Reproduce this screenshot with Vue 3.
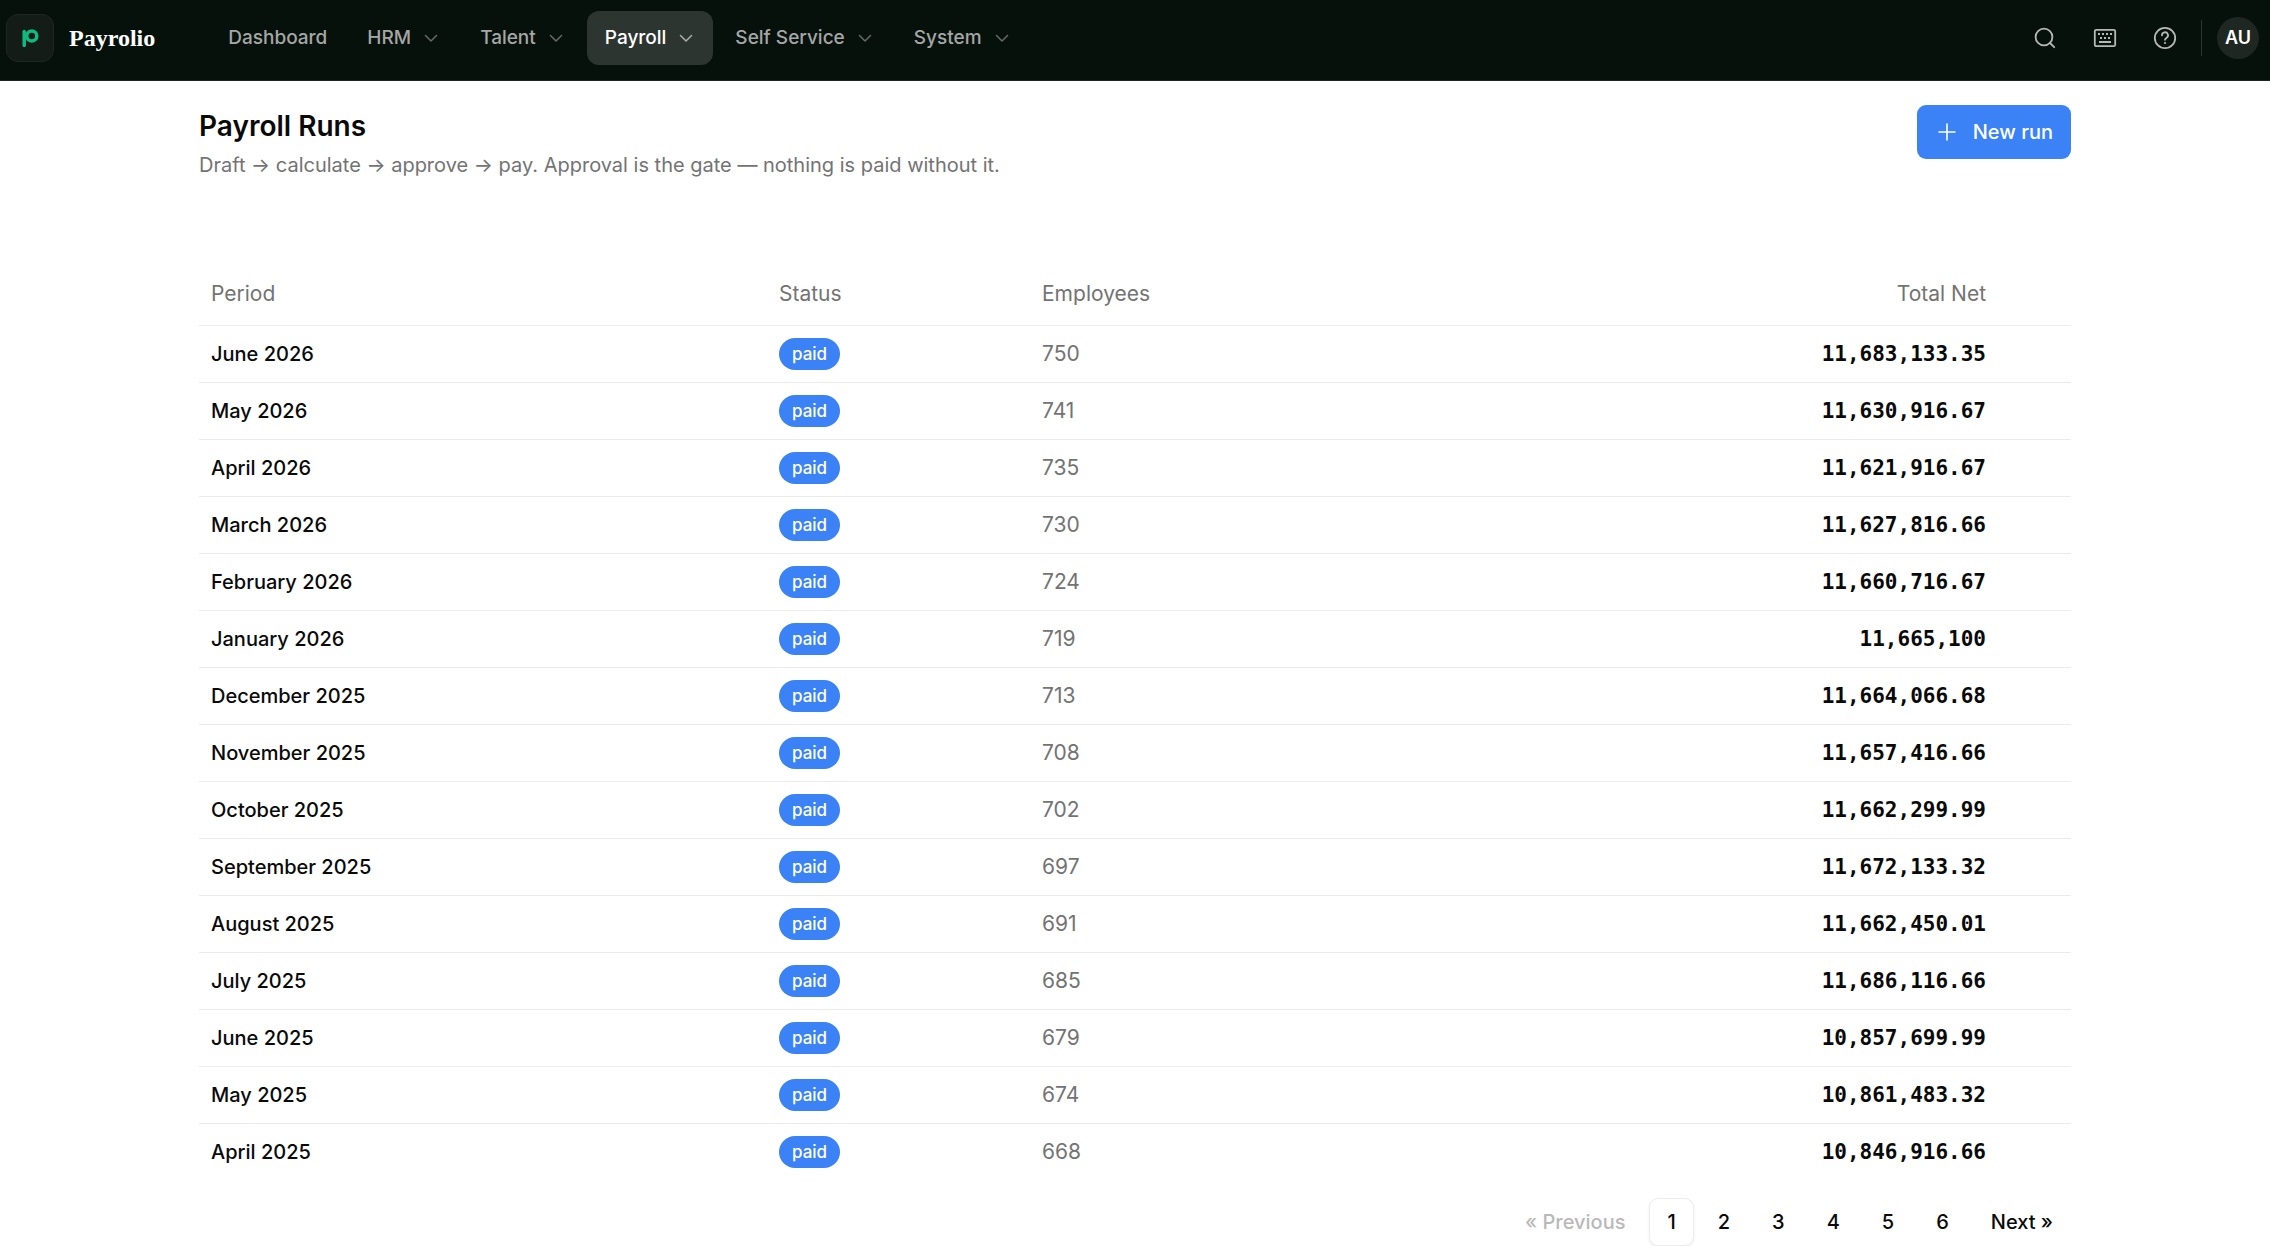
<template>
  <div class="app">
    <header class="topbar">
      <a href="#" class="brand">
        <span class="brand-mark">
          <svg viewBox="0 0 24 24" width="24" height="24" fill="none" stroke="currentColor" stroke-width="3.5" stroke-linecap="round">
            <path d="M6.2 5.6v13.8" />
            <circle cx="13.8" cy="10" r="5" />
          </svg>
        </span>
        <span class="brand-name">Payrolio</span>
      </a>

      <nav class="main-nav" aria-label="Main">
        <a href="#" class="nav-item">Dashboard</a>
        <button
          v-for="item in menus"
          :key="item"
          type="button"
          class="nav-item"
          :class="{ active: item === activeMenu }"
          @click="activeMenu = item"
        >
          {{ item }}
          <svg class="caret" viewBox="0 0 18 18" width="18" height="18" fill="none" stroke="currentColor" stroke-width="1.5" stroke-linecap="round" stroke-linejoin="round">
            <path d="M3.5 6.5 9 12l5.5-5.5" />
          </svg>
        </button>
      </nav>

      <div class="tools">
        <button type="button" class="tool" aria-label="Search">
          <svg viewBox="0 0 24 24" width="24" height="24" fill="none" stroke="currentColor" stroke-width="1.8" stroke-linecap="round">
            <circle cx="11" cy="11" r="8.4" />
            <path d="m17 17 4.2 4.2" />
          </svg>
        </button>
        <button type="button" class="tool" aria-label="Keyboard shortcuts">
          <svg viewBox="0 0 24 24" width="24" height="24" fill="none" stroke="currentColor" stroke-width="1.8">
            <rect x="1.8" y="3.8" width="20.4" height="16.4" rx="1.5" />
            <path d="M5 8h2M9 8h2M13 8h2M17 8h2M7 12h2M11 12h2M15 12h2M6 16h12" />
          </svg>
        </button>
        <button type="button" class="tool" aria-label="Help">
          <svg viewBox="0 0 24 24" width="24" height="24" fill="none" stroke="currentColor" stroke-width="1.8" stroke-linecap="round">
            <circle cx="12" cy="12" r="10.2" />
            <path d="M9 9.4a3 3 0 1 1 4.6 2.4c-.9.6-1.6 1-1.6 2" />
            <path d="M12 17h.01" stroke-width="2.2" />
          </svg>
        </button>
        <span class="divider"></span>
        <button type="button" class="avatar" aria-label="Account">AU</button>
      </div>
    </header>

    <main class="page">
      <div class="page-head">
        <div>
          <h1>Payroll Runs</h1>
          <p>Draft → calculate → approve → pay. Approval is the gate — nothing is paid without it.</p>
        </div>
        <button type="button" class="new-run">
          <svg viewBox="0 0 24 24" width="24" height="24" fill="none" stroke="currentColor" stroke-width="1.6" stroke-linecap="round">
            <path d="M12 4v16M4 12h16" />
          </svg>
          New run
        </button>
      </div>

      <table class="runs">
        <thead>
          <tr>
            <th class="col-period">Period</th>
            <th class="col-status">Status</th>
            <th class="col-employees">Employees</th>
            <th class="col-net">Total Net</th>
            <td class="col-actions"></td>
          </tr>
        </thead>
        <tbody>
          <tr v-for="run in runs" :key="run.period">
            <td class="period">{{ run.period }}</td>
            <td><span class="badge">paid</span></td>
            <td class="employees">{{ run.employees }}</td>
            <td class="net">{{ run.net }}</td>
            <td></td>
          </tr>
        </tbody>
      </table>

      <nav class="pagination" aria-label="Pagination">
        <button type="button" class="page-link" disabled>« Previous</button>
        <button
          v-for="n in 6"
          :key="n"
          type="button"
          class="page-link"
          :class="{ current: n === currentPage }"
          @click="currentPage = n"
        >{{ n }}</button>
        <button type="button" class="page-link">Next »</button>
      </nav>
    </main>
  </div>
</template>

<script setup>
import { ref } from 'vue';

const menus = ['HRM', 'Talent', 'Payroll', 'Self Service', 'System'];
const activeMenu = ref('Payroll');
const currentPage = ref(1);

const runs = [
  { period: 'June 2026', employees: 750, net: '11,683,133.35' },
  { period: 'May 2026', employees: 741, net: '11,630,916.67' },
  { period: 'April 2026', employees: 735, net: '11,621,916.67' },
  { period: 'March 2026', employees: 730, net: '11,627,816.66' },
  { period: 'February 2026', employees: 724, net: '11,660,716.67' },
  { period: 'January 2026', employees: 719, net: '11,665,100' },
  { period: 'December 2025', employees: 713, net: '11,664,066.68' },
  { period: 'November 2025', employees: 708, net: '11,657,416.66' },
  { period: 'October 2025', employees: 702, net: '11,662,299.99' },
  { period: 'September 2025', employees: 697, net: '11,672,133.32' },
  { period: 'August 2025', employees: 691, net: '11,662,450.01' },
  { period: 'July 2025', employees: 685, net: '11,686,116.66' },
  { period: 'June 2025', employees: 679, net: '10,857,699.99' },
  { period: 'May 2025', employees: 674, net: '10,861,483.32' },
  { period: 'April 2025', employees: 668, net: '10,846,916.66' }
];
</script>

<style>
body {
  background: #fff;
}
</style>

<style scoped>
.app {
  font-family: Inter, "Liberation Sans", sans-serif;
  font-size: 20px;
  line-height: 30px;
  color: #0a0a0a;
}

button {
  font: inherit;
  color: inherit;
  background: none;
  border: 0;
  padding: 0;
  cursor: pointer;
}

a {
  color: inherit;
  text-decoration: none;
}

svg {
  display: block;
  flex: none;
}

.topbar {
  display: flex;
  align-items: center;
  height: 81px;
  padding: 0 11px 4px 6px;
  box-sizing: border-box;
  background: #07110c;
  border-bottom: 1px solid #1f2723;
}

.brand {
  display: flex;
  align-items: center;
  gap: 15px;
  margin-right: 55px;
}

.brand-mark {
  display: flex;
  align-items: center;
  justify-content: center;
  width: 48px;
  height: 48px;
  box-sizing: border-box;
  border: 1px solid #1f2723;
  border-radius: 12px;
  background: #131c17;
  color: #10b981;
}

.brand-name {
  font-family: "Liberation Serif", serif;
  font-size: 24px;
  font-weight: 700;
  color: #fff;
}

.main-nav {
  display: flex;
  gap: 4px;
}

.nav-item {
  display: flex;
  align-items: center;
  gap: 11px;
  padding: 12px 18px;
  border-radius: 12px;
  font-size: 19px;
  font-weight: 500;
  color: #a5a7a6;
}

.nav-item.active {
  background: #2d3531;
  color: #fff;
}

.caret {
  opacity: 0.6;
}

.tools {
  display: flex;
  align-items: center;
  margin-left: auto;
}

.tool {
  display: flex;
  align-items: center;
  justify-content: center;
  width: 60px;
  height: 54px;
  color: #b5b8b6;
}

.divider {
  width: 1px;
  height: 36px;
  margin: 0 15px 0 6px;
  background: #2d3531;
}

.avatar {
  width: 42px;
  height: 42px;
  border-radius: 50%;
  background: #1f2723;
  color: #fff;
  font-size: 18px;
  font-weight: 600;
}

.page {
  max-width: 1872px;
  margin: 0 auto;
  padding: 24px 24px 0;
}

.page-head {
  display: flex;
  justify-content: space-between;
  align-items: flex-start;
  margin-bottom: 84px;
}

h1 {
  margin: 0 0 3px;
  font-size: 28px;
  line-height: 42px;
  font-weight: 600;
}

p {
  margin: 0;
  color: #737373;
}

.new-run {
  display: flex;
  align-items: center;
  gap: 14px;
  height: 54px;
  padding: 0 18px;
  border-radius: 9px;
  background: #3b82f6;
  color: #fff;
  font-weight: 500;
}

.runs {
  width: 100%;
  table-layout: fixed;
  border-collapse: collapse;
}

.runs th,
.runs td {
  box-sizing: border-box;
  height: 57px;
  padding: 0 12px;
  text-align: left;
  vertical-align: middle;
}

.runs thead th {
  height: 61px;
  font-size: 21px;
  font-weight: 400;
  color: #737373;
}

.runs tr {
  border-bottom: 1px solid #ebebeb;
}

.runs tbody tr:last-child {
  border-bottom: 0;
}

.col-period {
  width: 568px;
}

.col-status {
  width: 263px;
}

.col-actions {
  width: 73px;
}

.period {
  font-weight: 500;
}

.employees {
  font-size: 21px;
  color: #737373;
}

.runs .col-net,
.runs .net {
  text-align: right;
}

.net {
  font-family: "DejaVu Sans Mono", "Liberation Mono", monospace;
  font-size: 21px;
  font-weight: 700;
}

.badge {
  display: inline-block;
  height: 32px;
  padding: 0 13px;
  border-radius: 16px;
  background: #3b82f6;
  color: #fff;
  font-size: 17px;
  line-height: 32px;
  font-weight: 500;
  vertical-align: middle;
}

.pagination {
  display: flex;
  justify-content: flex-end;
  align-items: center;
  gap: 6px;
  margin-top: 18px;
}

.page-link {
  height: 48px;
  padding: 0 17px;
  border: 1px solid transparent;
  border-radius: 9px;
  font-weight: 500;
}

.page-link:disabled {
  color: #b9b9b9;
}

.page-link.current {
  border-color: #ebebeb;
  box-shadow: 0 2px 3px rgba(0, 0, 0, 0.06);
}
</style>
